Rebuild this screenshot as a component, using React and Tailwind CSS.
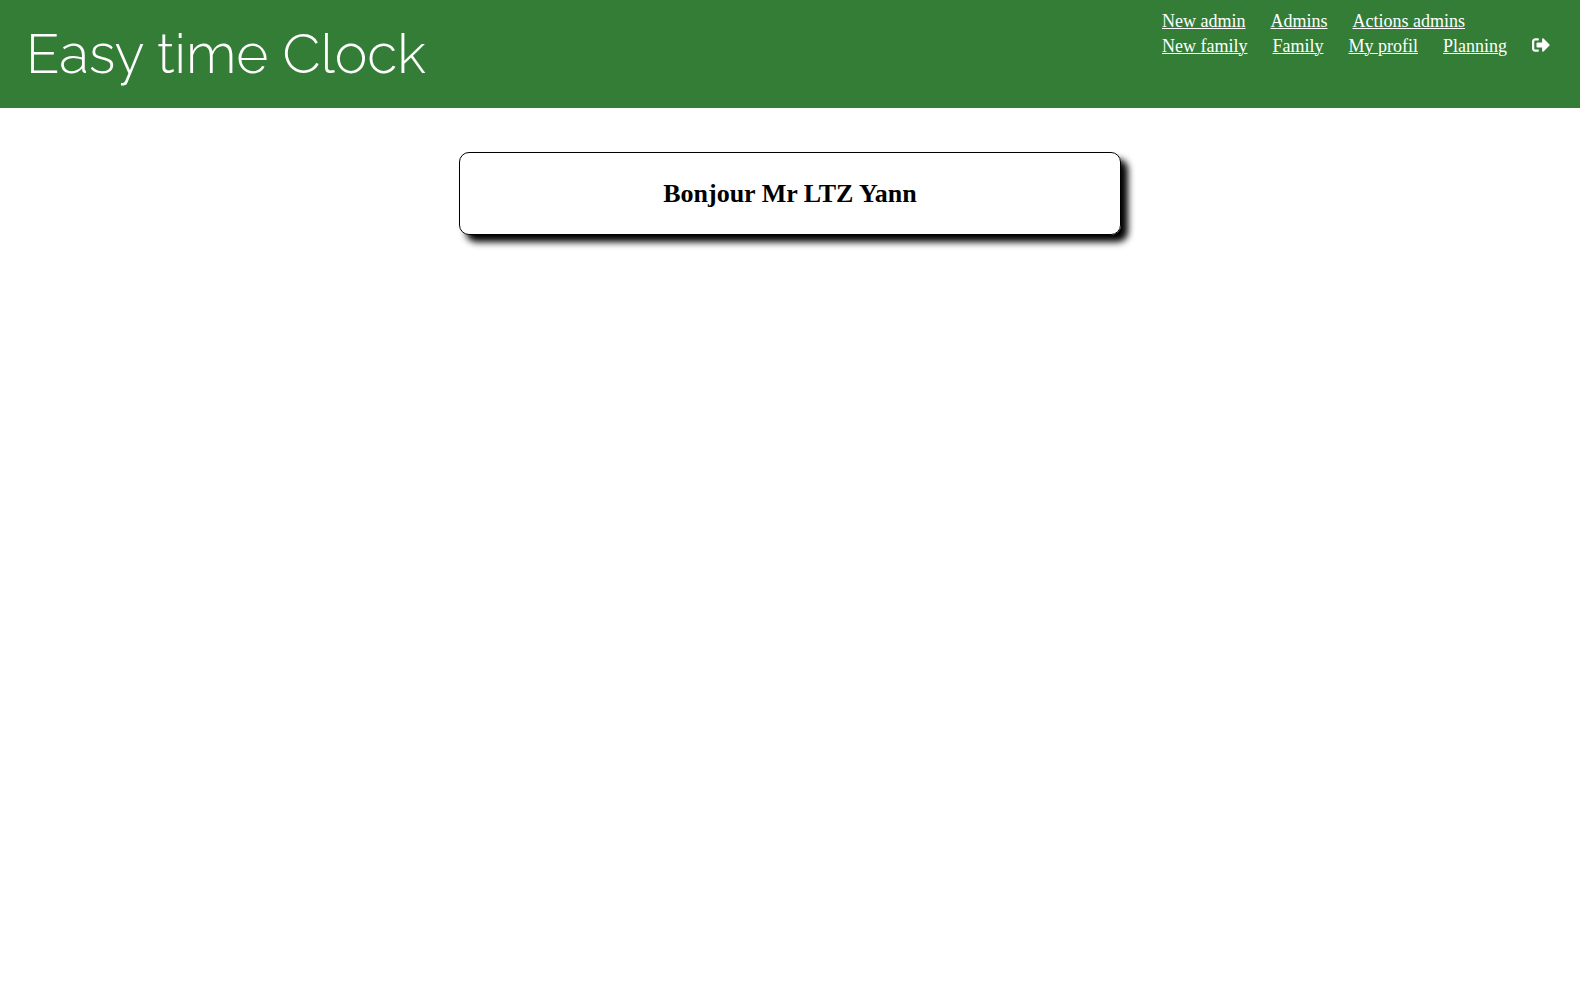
import { FaSignOutAlt } from "react-icons/fa";

const links = "underline decoration-1";

export default function App() {
  return (
    <div className="min-h-screen bg-white font-['Liberation_Serif',serif] text-black">
      <header className="flex min-h-[108px] flex-wrap items-start justify-between bg-[#337d37] pr-[30px] pl-[26px] text-white">
        <h1 className="pt-5 font-['Raleway','Lato',sans-serif] text-[55px] leading-[68px] font-light">Easy time Clock</h1>
        <nav className="flex flex-col pt-[9px] text-[18px] leading-[25px]">
          <div className="flex gap-[25px]">
            <a href="#new-admin" className={links}>New admin</a>
            <a href="#admins" className={links}>Admins</a>
            <a href="#actions" className={links}>Actions admins</a>
          </div>
          <div className="flex gap-[25px]">
            <a href="#new-family" className={links}>New family</a>
            <a href="#family" className={links}>Family</a>
            <a href="#profil" className={links}>My profil</a>
            <a href="#planning" className={links}>Planning</a>
            <a href="#logout" aria-label="Log out" className="flex items-start pt-[2px]">
              <FaSignOutAlt size={18} />
            </a>
          </div>
        </nav>
      </header>
      <main className="flex justify-center px-4 pt-11">
        <section className="w-full max-w-[662px] rounded-[10px] border border-black pt-[25px] pb-6 text-center shadow-[7px_7px_7px_black]">
          <h2 className="text-[26px] leading-8 font-bold">Bonjour Mr LTZ Yann</h2>
        </section>
      </main>
    </div>
  );
}
